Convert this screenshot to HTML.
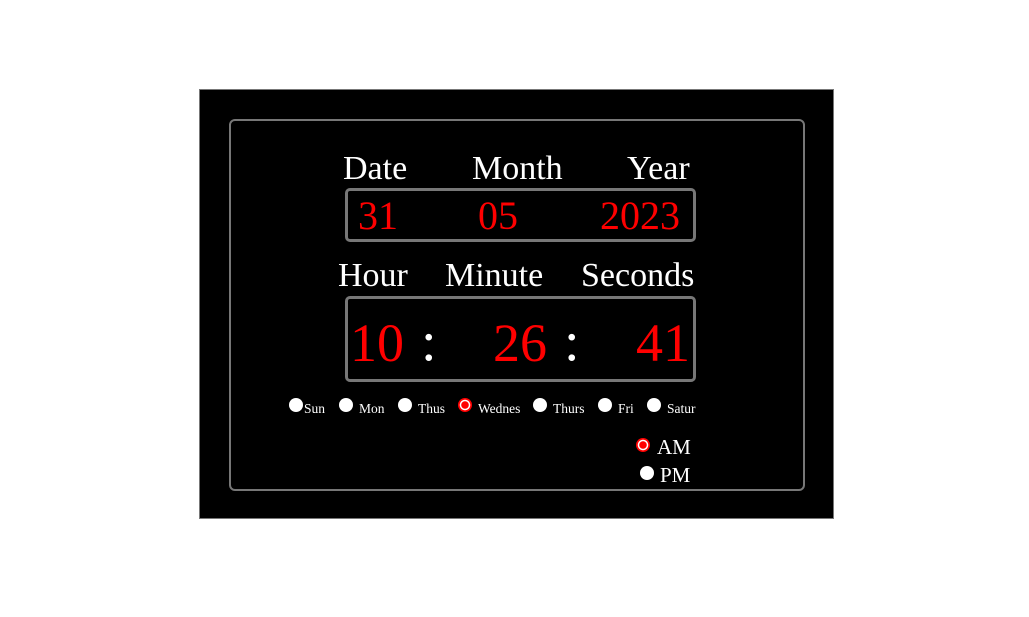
<!DOCTYPE html><html><head><style>
body{margin:0;width:1029px;height:617px;background:#fff;position:relative;overflow:hidden;font-family:"Liberation Serif",serif}
.a{position:absolute;white-space:nowrap}
.o{left:199px;top:89px;width:633px;height:428px;background:#000;border:1px solid #777}
.i{left:229px;top:119px;width:572px;height:368px;border:2px solid #777;border-radius:6px}
.bx{border:3px solid #777;border-radius:5px}
.w{color:#fff}.r{color:#f00}
.c{width:14px;height:14px;border-radius:50%;background:#fff}
.sel{width:14px;height:14px;border-radius:50%;background:radial-gradient(circle,#f00 0 3.5px,#fff 4px 5px,#f00 5.5px)}
.d{font-size:13.5px;color:#fff}
.l{font-size:34px}
</style></head><body>
<div class="a o"></div>
<div class="a i"></div>
<div class="a w l" style="left:343px;top:150px">Date</div>
<div class="a w l" style="left:472px;top:150px">Month</div>
<div class="a w l" style="left:627px;top:150px">Year</div>
<div class="a bx" style="left:345px;top:188px;width:345px;height:48px"></div>
<div class="a r" style="left:358px;top:192px;font-size:40px">31</div>
<div class="a r" style="left:478px;top:192px;font-size:40px">05</div>
<div class="a r" style="left:600px;top:192px;font-size:40px">2023</div>
<div class="a w l" style="left:338px;top:257px">Hour</div>
<div class="a w l" style="left:445px;top:257px">Minute</div>
<div class="a w l" style="left:581px;top:257px">Seconds</div>
<div class="a bx" style="left:345px;top:296px;width:345px;height:80px"></div>
<div class="a r" style="left:350px;top:312px;font-size:54px">10</div>
<div class="a w" style="left:421px;top:310px;font-size:56px">:</div>
<div class="a r" style="left:493px;top:312px;font-size:54px">26</div>
<div class="a w" style="left:564px;top:310px;font-size:56px">:</div>
<div class="a r" style="left:636px;top:312px;font-size:54px">41</div>
<div class="a c" style="left:289px;top:398px"></div><div class="a d" style="left:304px;top:401px">Sun</div>
<div class="a c" style="left:339px;top:398px"></div><div class="a d" style="left:359px;top:401px">Mon</div>
<div class="a c" style="left:398px;top:398px"></div><div class="a d" style="left:418px;top:401px">Thus</div>
<div class="a sel" style="left:458px;top:398px"></div><div class="a d" style="left:478px;top:401px">Wednes</div>
<div class="a c" style="left:533px;top:398px"></div><div class="a d" style="left:553px;top:401px">Thurs</div>
<div class="a c" style="left:598px;top:398px"></div><div class="a d" style="left:618px;top:401px">Fri</div>
<div class="a c" style="left:647px;top:398px"></div><div class="a d" style="left:667px;top:401px">Satur</div>
<div class="a sel" style="left:636px;top:438px"></div><div class="a w" style="left:657px;top:435px;font-size:21px">AM</div>
<div class="a c" style="left:640px;top:466px"></div><div class="a w" style="left:660px;top:463px;font-size:21px">PM</div>
</body></html>
